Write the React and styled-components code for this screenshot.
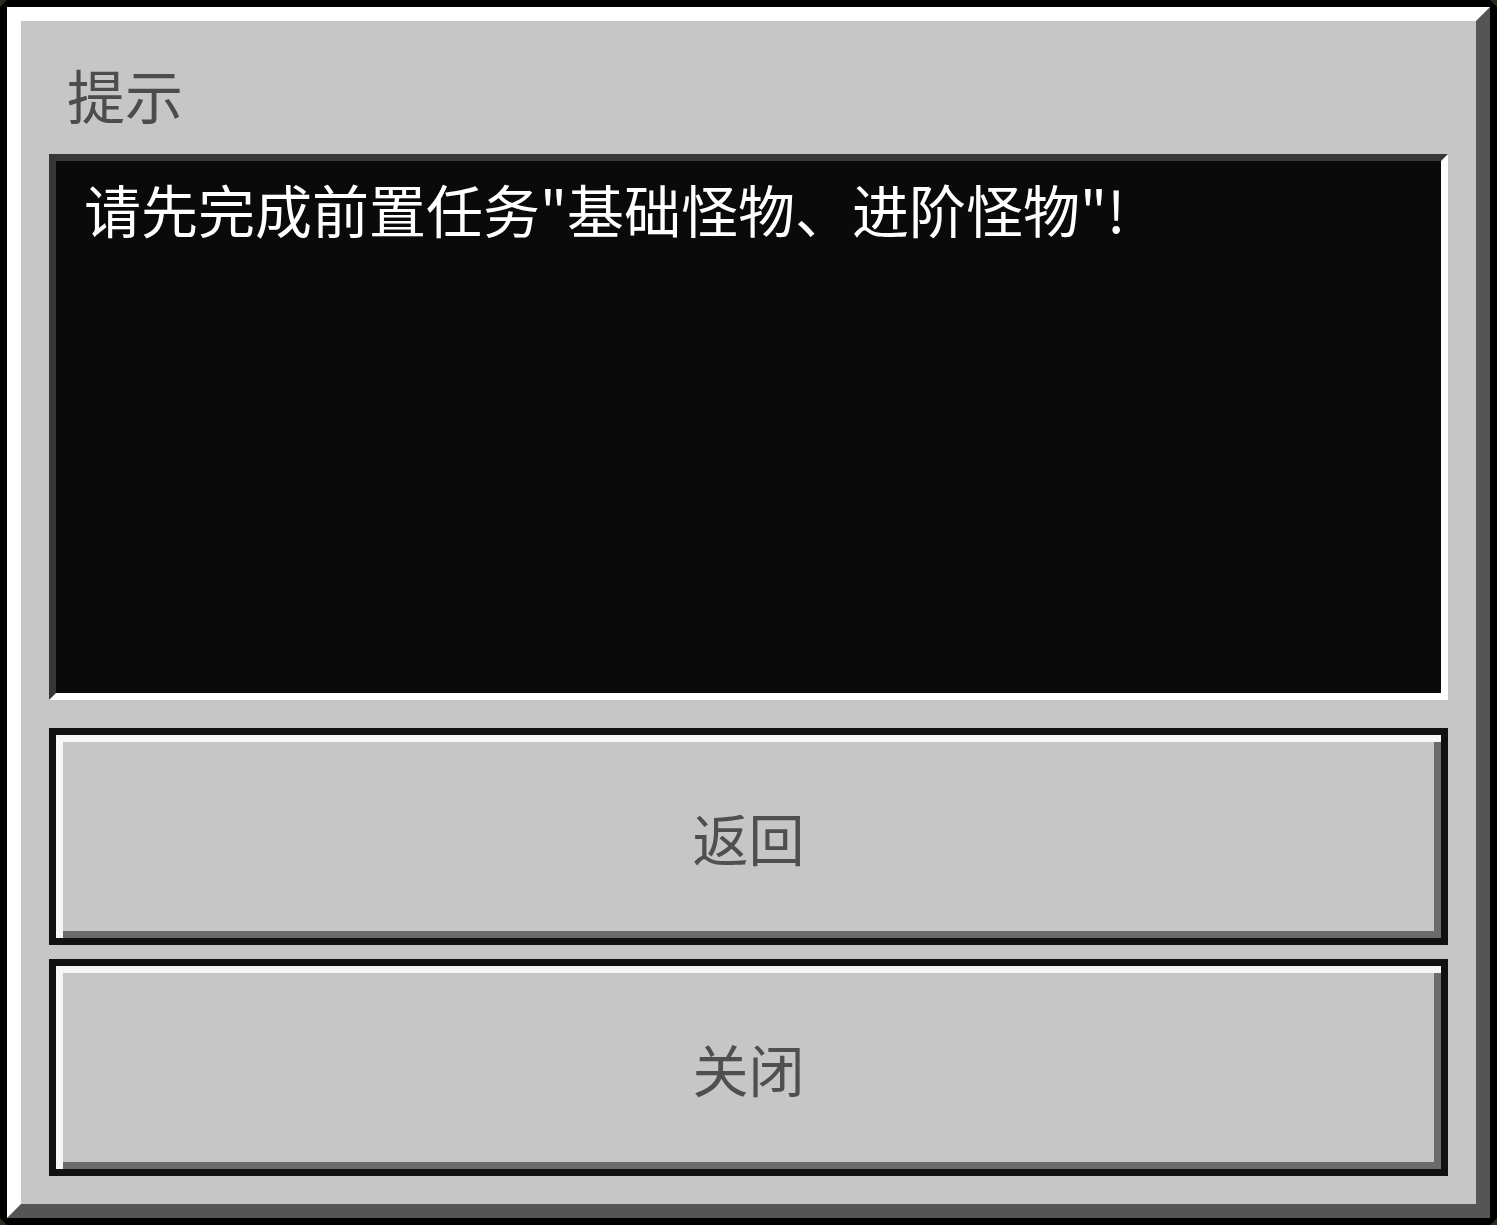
import React from "react";
import styled, { createGlobalStyle } from "styled-components";

const GlobalStyle = createGlobalStyle`
  html, body {
    margin: 0;
    padding: 0;
    background: #2e2a1f;
  }
  * {
    box-sizing: border-box;
  }
`;

const Frame = styled.div`
  width: 1497px;
  height: 1225px;
  border: 7px solid #000;
  clip-path: polygon(7px 0, calc(100% - 7px) 0, 100% 7px, 100% calc(100% - 7px), calc(100% - 7px) 100%, 7px 100%, 0 calc(100% - 7px), 0 7px);
  font-family: "Noto Sans CJK SC", "Noto Sans", sans-serif;
`;

const Panel = styled.div`
  height: 100%;
  display: flex;
  flex-direction: column;
  padding: 28px;
  background: #c6c6c6;
  border-style: solid;
  border-width: 14px;
  border-color: #ffffff #555555 #555555 #ffffff;
`;

const Title = styled.h1`
  margin: 0 0 28px 18px;
  padding-top: 16px;
  height: 77px;
  font-size: 58px;
  line-height: 58px;
  font-weight: 400;
  color: #4c4c4c;
`;

const MessageBox = styled.div`
  flex: 1;
  margin-bottom: 28px;
  padding: 18px 28px;
  background: #0a0a0a;
  border-style: solid;
  border-width: 7px;
  border-color: #373737 #ffffff #ffffff #373737;
  color: #ffffff;
  font-size: 57px;
  line-height: 58px;
`;

const Actions = styled.div`
  display: flex;
  flex-direction: column;
  gap: 14px;
`;

const Button = styled.button`
  height: 217px;
  padding: 0;
  border: 7px solid #111111;
  background: #c6c6c6;
  box-shadow: inset 7px 7px 0 #f6f6f6, inset -7px -7px 0 #6b6b6b;
  font-family: inherit;
  font-size: 56px;
  line-height: 58px;
  color: #4f4f4f;
  cursor: pointer;
`;

export default function App() {
  return (
    <>
      <GlobalStyle />
      <Frame>
        <Panel>
          <Title>提示</Title>
          <MessageBox>请先完成前置任务"基础怪物、进阶怪物"!</MessageBox>
          <Actions>
            <Button>返回</Button>
            <Button>关闭</Button>
          </Actions>
        </Panel>
      </Frame>
    </>
  );
}
